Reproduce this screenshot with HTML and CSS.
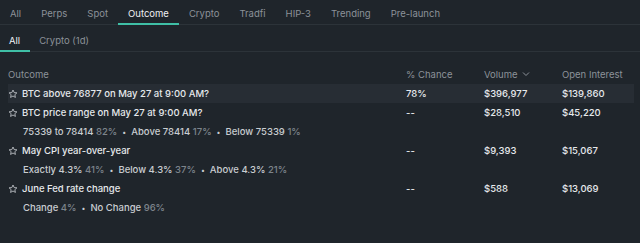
FILE: index.html
```html
<!DOCTYPE html>
<html lang="en">
<head>
    <meta charset="UTF-8">
    <title>Outcome markets</title>
    <link rel="stylesheet" href="styles.css">
</head>
<body>
    <div class="tabs">
        <span class="tab">All</span>
        <span class="tab">Perps</span>
        <span class="tab">Spot</span>
        <span class="tab active">Outcome</span>
        <span class="tab">Crypto</span>
        <span class="tab">Tradfi</span>
        <span class="tab">HIP-3</span>
        <span class="tab">Trending</span>
        <span class="tab">Pre-launch</span>
    </div>
    <div class="subtabs">
        <span class="subtab active">All</span>
        <span class="subtab">Crypto (1d)</span>
    </div>

    <div class="table">
        <div class="row head">
            <span class="c-name">Outcome</span>
            <span class="c-chance">% Chance</span>
            <span class="c-vol">Volume <svg class="chev" width="8" height="6" viewBox="0 0 8 6"><path d="M1 1.5 L4 4.5 L7 1.5" fill="none" stroke="currentColor" stroke-width="1"/></svg></span>
            <span class="c-oi">Open Interest</span>
        </div>

        <div class="row market hl">
            <span class="c-name"><svg class="star" viewBox="0 0 12 12"><path d="M6 1.2 L7.4 4.3 L10.7 4.6 L8.2 6.8 L8.9 10.1 L6 8.4 L3.1 10.1 L3.8 6.8 L1.3 4.6 L4.6 4.3 Z" fill="none" stroke="currentColor" stroke-width="1"/></svg>BTC above 76877 on May 27 at 9:00 AM?</span>
            <span class="c-chance">78%</span>
            <span class="c-vol">$396,977</span>
            <span class="c-oi">$139,860</span>
        </div>

        <div class="row market">
            <span class="c-name"><svg class="star" viewBox="0 0 12 12"><path d="M6 1.2 L7.4 4.3 L10.7 4.6 L8.2 6.8 L8.9 10.1 L6 8.4 L3.1 10.1 L3.8 6.8 L1.3 4.6 L4.6 4.3 Z" fill="none" stroke="currentColor" stroke-width="1"/></svg>BTC price range on May 27 at 9:00 AM?</span>
            <span class="c-chance">--</span>
            <span class="c-vol">$28,510</span>
            <span class="c-oi">$45,220</span>
        </div>
        <div class="sub">75339 to 78414 <i>82%</i><b>•</b>Above 78414 <i>17%</i><b>•</b>Below 75339 <i>1%</i></div>

        <div class="row market">
            <span class="c-name"><svg class="star" viewBox="0 0 12 12"><path d="M6 1.2 L7.4 4.3 L10.7 4.6 L8.2 6.8 L8.9 10.1 L6 8.4 L3.1 10.1 L3.8 6.8 L1.3 4.6 L4.6 4.3 Z" fill="none" stroke="currentColor" stroke-width="1"/></svg>May CPI year-over-year</span>
            <span class="c-chance">--</span>
            <span class="c-vol">$9,393</span>
            <span class="c-oi">$15,067</span>
        </div>
        <div class="sub">Exactly 4.3% <i>41%</i><b>•</b>Below 4.3% <i>37%</i><b>•</b>Above 4.3% <i>21%</i></div>

        <div class="row market">
            <span class="c-name"><svg class="star" viewBox="0 0 12 12"><path d="M6 1.2 L7.4 4.3 L10.7 4.6 L8.2 6.8 L8.9 10.1 L6 8.4 L3.1 10.1 L3.8 6.8 L1.3 4.6 L4.6 4.3 Z" fill="none" stroke="currentColor" stroke-width="1"/></svg>June Fed rate change</span>
            <span class="c-chance">--</span>
            <span class="c-vol">$588</span>
            <span class="c-oi">$13,069</span>
        </div>
        <div class="sub">Change <i>4%</i><b>•</b>No Change <i>96%</i></div>
    </div>
</body>
</html>
```

FILE: styles.css
```css
* {
    box-sizing: border-box;
    margin: 0;
    padding: 0;
}

html {
    background-color: #1f252b;
}

body {
    font-family: Inter, "Noto Sans", sans-serif;
    color: #e6e9ec;
    overflow: hidden;
}

.tabs {
    display: flex;
    height: 25px;
    align-items: stretch;
    border-bottom: 1px solid #2c3339;
    font-size: 9.5px;
}

.tab {
    display: flex;
    align-items: center;
    padding: 4px 10px 0;
    color: #8c9299;
    border-bottom: 2px solid transparent;
    margin-bottom: -1px;
}

.tab.active {
    color: #eef0f2;
    border-bottom-color: #3fbfa6;
}

.subtabs {
    display: flex;
    height: 27px;
    border-bottom: 1px solid #2c3339;
    font-size: 9.5px;
}

.subtab {
    display: flex;
    align-items: center;
    padding: 5px 10px 0 9px;
    color: #8c9299;
    border-bottom: 2px solid transparent;
    margin-bottom: -1px;
}

.subtab.active {
    color: #eef0f2;
    border-bottom-color: #3fbfa6;
}

.table {
    padding: 0 6px 0 8px;
    font-size: 9.5px;
}

.row {
    display: grid;
    grid-template-columns: 398px 78px 78px 1fr;
    align-items: center;
}

.head {
    height: 32px;
    padding-top: 12px;
    color: #8c9299;
}

.chev {
    margin-left: 2px;
    vertical-align: 1px;
}

.market {
    height: 19px;
    font-weight: 500;
}

.hl {
    background-color: #272d34;
}

.c-name {
    display: flex;
    align-items: center;
}

.star {
    width: 10px;
    height: 10px;
    margin-right: 4px;
    color: #c4c8cc;
}

.sub {
    height: 19px;
    line-height: 19px;
    padding-left: 15px;
    color: #c9cdd1;
    font-weight: 500;
    white-space: nowrap;
}

.sub i {
    font-style: normal;
    color: #7d848b;
}

.sub b {
    font-weight: 400;
    font-size: 7px;
    padding: 0 5px;
    color: #c9cdd1;
}
```
